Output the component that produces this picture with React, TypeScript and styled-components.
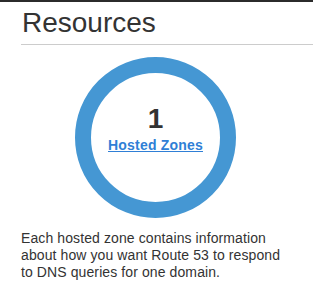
import React from 'react'
import styled, { createGlobalStyle } from 'styled-components'

const GlobalStyle = createGlobalStyle`
  html, body {
    margin: 0;
    padding: 0;
    background: #ffffff;
    font-family: "Liberation Sans", Arial, sans-serif;
    color: #333333;
  }
`

const Page = styled.main`
  border-top: 2px solid #2b2b2b;
  padding-left: 21px;
`

const Title = styled.h1`
  margin: 5px 0 0;
  padding-left: 1px;
  padding-bottom: 5px;
  font-size: 28px;
  font-weight: normal;
  line-height: 32px;
  color: #333333;
  border-bottom: 1px solid #cccccc;
`

const Content = styled.section`
  width: 269px;
  display: flex;
  flex-direction: column;
  align-items: center;
`

const Ring = styled.div`
  margin-top: 12px;
  width: 161px;
  height: 161px;
  box-sizing: border-box;
  border: 16px solid #4597d3;
  border-radius: 50%;
  display: flex;
  flex-direction: column;
  align-items: center;
  justify-content: center;
  padding-bottom: 18px;
`

const Count = styled.div`
  font-size: 28px;
  font-weight: bold;
  line-height: 32px;
  color: #333333;
  margin-bottom: 2px;
`

const ZoneLink = styled.a`
  font-size: 14px;
  font-weight: bold;
  line-height: 17px;
  letter-spacing: 0.2px;
  color: #2f7fd6;
  text-decoration: underline;
`

const Description = styled.p`
  margin: 12px 0 0;
  align-self: stretch;
  font-size: 14px;
  line-height: 16.8px;
  letter-spacing: 0.1px;
  color: #333333;
`

export default function App() {
  return (
    <Page>
      <GlobalStyle />
      <Title>Resources</Title>
      <Content>
        <Ring>
          <Count>1</Count>
          <ZoneLink href='#'>Hosted Zones</ZoneLink>
        </Ring>
        <Description>
          Each hosted zone contains information about how you want Route 53 to
          respond to DNS queries for one domain.
        </Description>
      </Content>
    </Page>
  )
}
